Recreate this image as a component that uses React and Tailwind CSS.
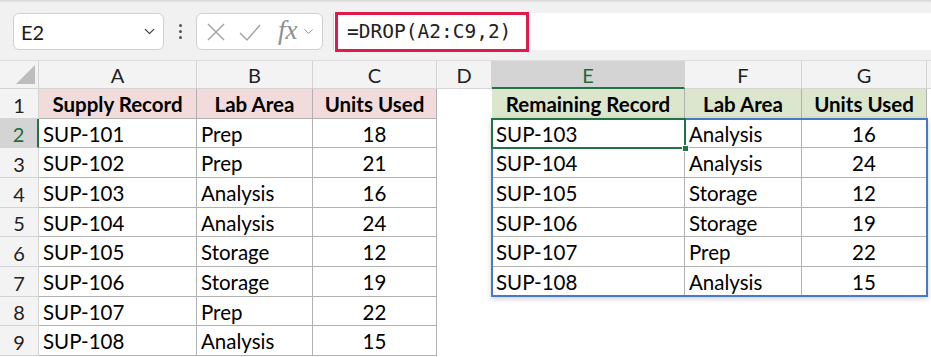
import { ChevronDown } from 'lucide-react'

const left = [
  ['SUP-101', 'Prep', '18'],
  ['SUP-102', 'Prep', '21'],
  ['SUP-103', 'Analysis', '16'],
  ['SUP-104', 'Analysis', '24'],
  ['SUP-105', 'Storage', '12'],
  ['SUP-106', 'Storage', '19'],
  ['SUP-107', 'Prep', '22'],
  ['SUP-108', 'Analysis', '15'],
]

const right = left.slice(2)

const cellFont = { fontFamily: 'Lato, "Noto Sans", sans-serif' }

function ColHeader({ label, selected, last }) {
  return (
    <div
      className={
        'flex items-center justify-center pt-[1px] text-[20px] border-b border-[#d4d4d4] ' +
        (last ? '' : 'border-r ') +
        (selected
          ? 'bg-[#d4d4d4] text-[#1e6b3c] border-b-2 border-b-[#217346]'
          : 'bg-[#f3f3f3] text-[#222]')
      }
    >
      {label}
    </div>
  )
}

function RowHeader({ n, selected }) {
  return (
    <div
      className={
        'flex items-center justify-center pt-[2px] text-[20px] border-b border-[#d4d4d4] ' +
        (selected
          ? 'bg-[#d4d4d4] text-[#1e6b3c] border-r-2 border-r-[#217346]'
          : 'bg-[#f3f3f3] text-[#222] border-r border-r-[#d4d4d4]')
      }
    >
      {n}
    </div>
  )
}

function Cell({ children, kind, bold, fill, center }) {
  // kind: 'table' gets gray borders, anything else stays blank
  const border = kind === 'table' ? 'border-r border-b border-[#b1b1b1] ' : ''
  return (
    <div
      className={
        'flex items-center pt-[2px] text-[20.5px] text-black whitespace-nowrap overflow-hidden ' +
        border +
        (center ? 'justify-center ' : 'pl-[4px] ') +
        (bold ? 'font-bold ' : '') +
        (fill || 'bg-white')
      }
    >
      {children}
    </div>
  )
}

function Toolbar() {
  return (
    <div className="relative h-[61px] bg-[#f1f1f1] border-b border-[#dcdcdc]">
      <div className="h-[3px] bg-gradient-to-b from-[#d6d6d6] to-[#f1f1f1]" />
      <div className="flex items-center h-[37px] mt-[10px]">
        {/* name box */}
        <div className="ml-[13px] w-[151px] h-full flex items-center justify-between rounded-[6px] border border-[#d1d1d1] bg-white pl-[7px] pr-[5px]">
          <span className="text-[20px] text-[#1a1a1a]" style={cellFont}>E2</span>
          <ChevronDown size={17} strokeWidth={1.6} className="text-[#333]" />
        </div>
        {/* dots */}
        <div className="w-[32px] flex flex-col items-center gap-[3px]">
          <span className="w-[3px] h-[3px] rounded-full bg-[#555]" />
          <span className="w-[3px] h-[3px] rounded-full bg-[#555]" />
          <span className="w-[3px] h-[3px] rounded-full bg-[#555]" />
        </div>
        {/* cancel / enter / fx */}
        <div className="w-[127px] h-full flex items-center rounded-[6px] border border-[#d1d1d1] bg-white pl-[9px]">
          <svg width="20" height="20" viewBox="0 0 20 20" className="mr-[13px]">
            <path d="M2 2 L18 18 M18 2 L2 18" stroke="#a3a3a3" strokeWidth="1.5" fill="none" />
          </svg>
          <svg width="22" height="20" viewBox="0 0 22 20" className="mr-[17px]">
            <path d="M1 11 L8 18 L21 3" stroke="#a3a3a3" strokeWidth="1.5" fill="none" />
          </svg>
          <span
            className="italic text-[27px] text-[#8f8f8f] leading-none -mt-[3px]"
            style={{ fontFamily: '"Liberation Serif", serif' }}
          >
            fx
          </span>
          <ChevronDown size={15} strokeWidth={1.6} className="text-[#8f8f8f] ml-[3px]" />
        </div>
        {/* formula bar */}
        <div className="ml-[10px] flex-1 h-full flex items-center bg-white border-l border-[#d1d1d1]">
          <div className="ml-[1px] h-[40px] w-[194px] flex items-center border-[3px] border-[#e11a4c] pl-[9px]">
            <span
              className="text-[19.5px] text-[#222]"
              style={{ fontFamily: '"DejaVu Sans Mono", "Liberation Mono", monospace' }}
            >
              =DROP(A2:C9,2)
            </span>
          </div>
        </div>
      </div>
    </div>
  )
}

export default function App() {
  const cells = []

  // header row
  cells.push(
    <div key="corner" className="relative bg-[#f3f3f3] border-r border-b border-[#d4d4d4]">
      <svg width="20" height="20" viewBox="0 0 20 20" className="absolute left-[16px] top-[4px]">
        <polygon points="19,0 19,19 0,19" fill="#bdbdbd" />
      </svg>
    </div>
  )
  ;['A', 'B', 'C', 'D', 'E', 'F', 'G', ''].forEach((l, i) =>
    cells.push(<ColHeader key={'h' + i} label={l} selected={l === 'E'} last={i === 7} />)
  )

  for (let r = 1; r <= 9; r++) {
    cells.push(<RowHeader key={'r' + r} n={r} selected={r === 2} />)
    if (r === 1) {
      const pink = 'bg-[#f2dcdb]'
      cells.push(<Cell key="a1" kind="table" bold center fill={pink}>Supply Record</Cell>)
      cells.push(<Cell key="b1" kind="table" bold center fill={pink}>Lab Area</Cell>)
      cells.push(<Cell key="c1" kind="table" bold center fill={pink}>Units Used</Cell>)
      cells.push(<Cell key="d1" />)
      const green = 'bg-[#dce6cc]'
      cells.push(<Cell key="e1" kind="table" bold center fill={green}>Remaining Record</Cell>)
      cells.push(<Cell key="f1" kind="table" bold center fill={green}>Lab Area</Cell>)
      cells.push(<Cell key="g1" kind="table" bold center fill={green}>Units Used</Cell>)
      cells.push(<Cell key="h1" />)
      continue
    }
    const l = left[r - 2]
    cells.push(<Cell key={'a' + r} kind="table">{l[0]}</Cell>)
    cells.push(<Cell key={'b' + r} kind="table">{l[1]}</Cell>)
    cells.push(<Cell key={'c' + r} kind="table" center>{l[2]}</Cell>)
    cells.push(<Cell key={'d' + r} />)
    const g = right[r - 2]
    if (g) {
      cells.push(<Cell key={'e' + r} kind="table">{g[0]}</Cell>)
      cells.push(<Cell key={'f' + r} kind="table">{g[1]}</Cell>)
      cells.push(<Cell key={'g' + r} kind="table" center>{g[2]}</Cell>)
    } else {
      cells.push(<Cell key={'e' + r} />)
      cells.push(<Cell key={'f' + r} />)
      cells.push(<Cell key={'g' + r} />)
    }
    cells.push(<Cell key={'h' + r} />)
  }

  return (
    <div className="w-[931px] h-[357px] overflow-hidden bg-white" style={cellFont}>
      <Toolbar />
      <div className="relative">
        <div className="grid grid-cols-[39px_158px_116px_124px_55px_193px_117px_125px_1fr] grid-rows-[28px_30px_29px_30px_30px_29px_30px_30px_29px_30px]">
          {cells}
        </div>
        {/* spill range outline E2:G7 */}
        <div className="pointer-events-none absolute left-[491px] top-[57px] w-[437px] h-[179px] border-2 border-[#4a78c8] shadow-[0_2px_5px_rgba(0,0,0,0.18)]" />
        {/* active cell E2 */}
        <div className="pointer-events-none absolute left-[491px] top-[57px] w-[195px] h-[31px] border-2 border-[#217346]" />
        <div className="pointer-events-none absolute left-[682px] top-[84px] w-[7px] h-[7px] bg-[#217346] border border-white" />
      </div>
    </div>
  )
}
